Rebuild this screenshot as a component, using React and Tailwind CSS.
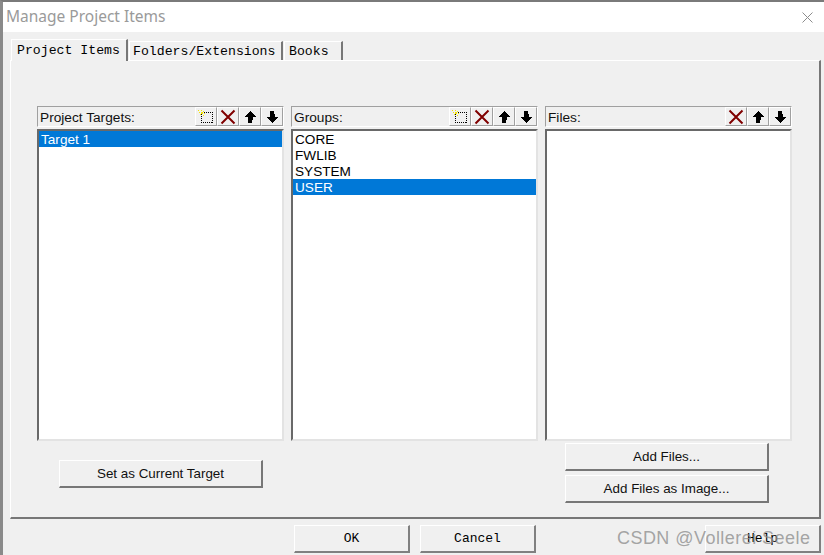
const NewIcon = () => (
  <svg width="16" height="16" viewBox="0 0 16 16" shapeRendering="crispEdges">
    <rect x="3.5" y="3.5" width="11" height="10" fill="none" stroke="#000" strokeDasharray="1 1" />
    <path d="M3 1h1v1h-1zM5 2h1v1h-1zM1 3h1v1h-1zM3 3h2v2h-2zM6 4h1v1h-1zM2 5h1v1h-1zM5 6h1v1h-1zM0 1h1v1h-1z" fill="#f7e600" />
  </svg>
);

const DeleteIcon = () => (
  <svg width="16" height="16" viewBox="0 0 16 16">
    <path d="M1.5 1.5 14.5 14.5M14.5 1.5 1.5 14.5" stroke="#800000" strokeWidth="2" fill="none" />
  </svg>
);

const UpIcon = () => (
  <svg width="14" height="14" viewBox="0 0 14 14" shapeRendering="crispEdges">
    <path d="M7 1 13 7H9.5V10L8.5 13H5V7H1Z" fill="#000" />
  </svg>
);

const DownIcon = () => (
  <svg width="14" height="14" viewBox="0 0 14 14" shapeRendering="crispEdges">
    <path d="M7 13 13 7H9.5V4L8.5 1H5V7H1Z" fill="#000" />
  </svg>
);

const ToolBtn = ({ children }) => (
  <div className="w-[22px] h-[19px] flex items-center justify-center border-l border-t border-l-white border-t-white border-r border-b border-r-[#a0a0a0] border-b-[#a0a0a0]">
    {children}
  </div>
);

const ListPanel = ({ title, showNew = true, items = [], selected }) => (
  <div className="w-[247px] flex flex-col">
    <div className="h-[21px] flex items-center justify-between border border-t-[#a0a0a0] border-l-[#a0a0a0] border-r-white border-b-white">
      <span className="pl-[2px] pt-[3px] text-[13.7px] text-[#111] font-['Liberation_Sans',sans-serif]">{title}</span>
      <div className="flex">
        {showNew && <ToolBtn><NewIcon /></ToolBtn>}
        <ToolBtn><DeleteIcon /></ToolBtn>
        <ToolBtn><UpIcon /></ToolBtn>
        <ToolBtn><DownIcon /></ToolBtn>
      </div>
    </div>
    <div className="mt-[2px] h-[312px] bg-white border-2 border-t-[#696969] border-l-[#696969] border-r-[#e3e3e3] border-b-[#e3e3e3]">
      {items.map((item) => (
        <div
          key={item}
          className={`h-4 leading-[18px] pl-[2px] text-[13.6px] font-['Liberation_Sans',sans-serif] ${
            item === selected ? "bg-[#0078d7] text-white" : "text-black"
          }`}
        >
          {item}
        </div>
      ))}
    </div>
  </div>
);

const SansButton = ({ children }) => (
  <div className="w-[204px] h-[28px] pt-[1px] flex items-center justify-center text-[13.4px] text-[#111] font-['Liberation_Sans',sans-serif] border border-t-white border-l-white border-r-2 border-b-2 border-r-[#777] border-b-[#777]">
    {children}
  </div>
);

const MonoButton = ({ children }) => (
  <div className="w-[116px] h-[28px] pt-[1px] flex items-center justify-center text-[13px] text-black font-['Liberation_Mono',monospace] border border-t-white border-l-white border-r-2 border-b-2 border-r-[#808080] border-b-[#808080]">
    {children}
  </div>
);

const Tab = ({ children, active, width, inset }) => (
  <div
    style={{ width, paddingLeft: inset }}
    className={`flex items-center font-['Liberation_Mono',monospace] text-[13.2px] text-black border-t border-l border-t-white border-l-white border-r-2 border-r-[#777] ${
      active ? "h-[22px] bg-[#f0f0f0] -mb-[1px] relative z-10" : "h-[19px] pt-[1px]"
    }`}
  >
    {children}
  </div>
);

export default function App() {
  return (
    <div className="relative w-[824px] h-[555px] overflow-hidden bg-[#f0f0f0] border-t-2 border-l-[3px] border-t-[#7a7a7a] border-l-[#8a8a8a] flex flex-col">
      <div className="h-[30px] shrink-0 bg-white flex items-center justify-between pl-[3px] pr-[11px]">
        <span className="text-[15.5px] text-[#9a9a9a] font-['Noto_Sans',sans-serif]">Manage Project Items</span>
        <svg width="11" height="11" viewBox="0 0 11 11">
          <path d="M.5.5 10.5 10.5M10.5.5.5 10.5" stroke="#8c8c8c" strokeWidth="1" fill="none" />
        </svg>
      </div>

      <div className="pl-[7px] pt-[7px] flex flex-col">
        <div className="flex items-end gap-[1px] pl-[1px] h-[21px]">
          <Tab active width="117px" inset="5px">Project Items</Tab>
          <Tab width="154px" inset="3px">Folders/Extensions</Tab>
          <Tab width="59px" inset="4px">Books</Tab>
        </div>

        <div className="w-[811px] h-[459px] border border-t-white border-l-white border-r-2 border-b-2 border-r-[#777] border-b-[#777] pl-[26px] pt-[45px]">
          <div className="flex gap-[7px]">
            <ListPanel title="Project Targets:" items={["Target 1"]} selected="Target 1" />
            <ListPanel title="Groups:" items={["CORE", "FWLIB", "SYSTEM", "USER"]} selected="USER" />
            <ListPanel title="Files:" showNew={false} />
          </div>

          <div className="flex justify-between pr-[50px] mt-[2px]">
            <div className="ml-[22px] mt-[17px]">
              <SansButton>Set as Current Target</SansButton>
            </div>
            <div className="flex flex-col gap-1">
              <SansButton>Add Files...</SansButton>
              <SansButton>Add Files as Image...</SansButton>
            </div>
          </div>
        </div>

        <div className="flex mt-[6px] pl-[284px]">
          <MonoButton>OK</MonoButton>
          <div className="ml-[10px]"><MonoButton>Cancel</MonoButton></div>
          <div className="ml-[169px]"><MonoButton>Help</MonoButton></div>
        </div>
      </div>

      <div className="absolute left-[614px] top-[524px] text-[18px] leading-6 tracking-[0.45px] text-[#8f8f8f]/80 font-['Liberation_Sans',sans-serif] whitespace-nowrap">
        CSDN @Vollerei Seele
      </div>
    </div>
  );
}
